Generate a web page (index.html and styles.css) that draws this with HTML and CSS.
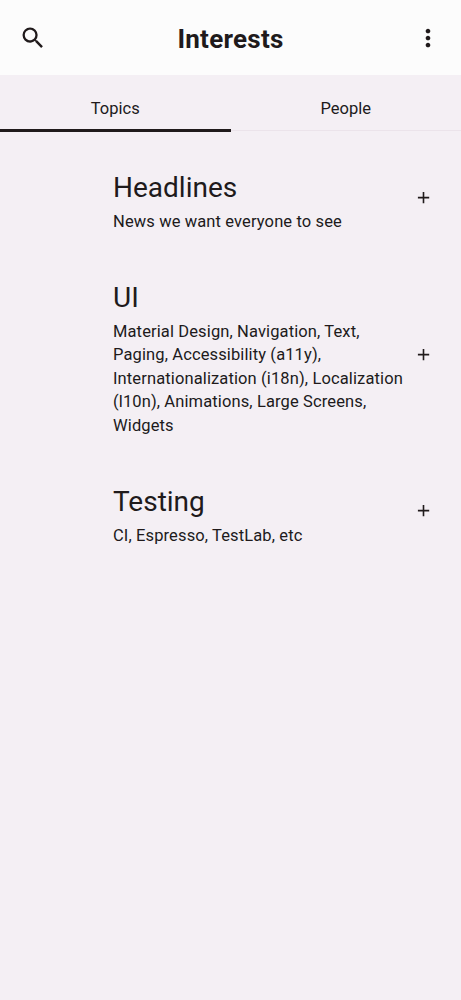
FILE: index.html
```
<!DOCTYPE html>
<html lang="en">
<head>
<meta charset="utf-8">
<title>Interests</title>
<link rel="stylesheet" href="styles.css">
</head>
<body>
<header class="app-bar">
  <svg class="icon" viewBox="0 0 24 24" role="img" aria-label="Search"><path d="M15.5 14h-.79l-.28-.27A6.47 6.47 0 0 0 16 9.5 6.5 6.5 0 1 0 9.5 16c1.61 0 3.09-.59 4.23-1.57l.27.28v.79l5 4.99L20.49 19l-4.99-5zm-6 0C7.01 14 5 11.99 5 9.5S7.01 5 9.5 5 14 7.01 14 9.5 11.99 14 9.5 14z"/></svg>
  <h1 class="title">Interests</h1>
  <svg class="icon" viewBox="0 0 24 24" role="img" aria-label="More"><path d="M12 8c1.1 0 2-.9 2-2s-.9-2-2-2-2 .9-2 2 .9 2 2 2zm0 2c-1.1 0-2 .9-2 2s.9 2 2 2 2-.9 2-2-.9-2-2-2zm0 6c-1.1 0-2 .9-2 2s.9 2 2 2 2-.9 2-2-.9-2-2-2z"/></svg>
</header>
<nav class="tabs">
  <span class="tab tab-active">Topics</span>
  <span class="tab">People</span>
</nav>
<main class="topics">
  <article class="topic">
    <div class="text"><h2 class="name">Headlines</h2><p class="desc">News we want everyone to see</p></div>
    <svg class="add" viewBox="0 0 14 14"><path d="M6.5 1v11.3M.9 6.6h11.3"/></svg>
  </article>
  <article class="topic">
    <div class="text"><h2 class="name">UI</h2><p class="desc">Material Design, Navigation, Text, Paging, Accessibility (a11y), Internationalization (i18n), Localization (l10n), Animations, Large Screens, Widgets</p></div>
    <svg class="add" viewBox="0 0 14 14"><path d="M6.5 1v11.3M.9 6.6h11.3"/></svg>
  </article>
  <article class="topic">
    <div class="text"><h2 class="name">Testing</h2><p class="desc">CI, Espresso, TestLab, etc</p></div>
    <svg class="add" viewBox="0 0 14 14"><path d="M6.5 1v11.3M.9 6.6h11.3"/></svg>
  </article>
</main>
</body>
</html>
```
FILE: styles.css
```
* { box-sizing: border-box; }
body {
  margin: 0;
  min-height: 1000px;
  background: #f4eff4;
  color: #201a1b;
  font-family: Roboto, sans-serif;
}
h1, h2, p { margin: 0; }
.app-bar {
  display: flex;
  align-items: center;
  justify-content: space-between;
  height: 75px;
  padding: 0 19px;
  background: #fcfcfc;
}
.icon { width: 28px; height: 28px; fill: #201a1b; }
.title { padding-top: 2px; font-size: 26px; font-weight: 700; line-height: 32px; letter-spacing: 0.25px; }
.tabs { display: flex; height: 57px; }
.tab {
  flex: 1;
  height: 57px;
  padding-top: 22px;
  border-bottom: 1px solid #ebe3ea;
  text-align: center;
  font-size: 16.5px;
  line-height: 24px;
  letter-spacing: 0;
}
.tab:not(.tab-active) { height: 56px; }
.tab-active { border-bottom: 3px solid #201a1b; }
.topics {
  display: flex;
  flex-direction: column;
  gap: 45.1px;
  padding: 37.4px 30px 0 113px;
}
.topic {
  display: flex;
  align-items: center;
  justify-content: space-between;
}
.text { width: 296px; flex: none; }
.name { font-size: 28px; font-weight: 400; line-height: 37px; padding-bottom: 4px; }
.desc { font-size: 16.5px; line-height: 23.5px; letter-spacing: 0.12px; }
.add {
  flex: none;
  width: 14px;
  height: 14px;
  margin-bottom: 7px;
  fill: none;
  stroke: #201a1b;
  stroke-width: 1.6;
}
```
